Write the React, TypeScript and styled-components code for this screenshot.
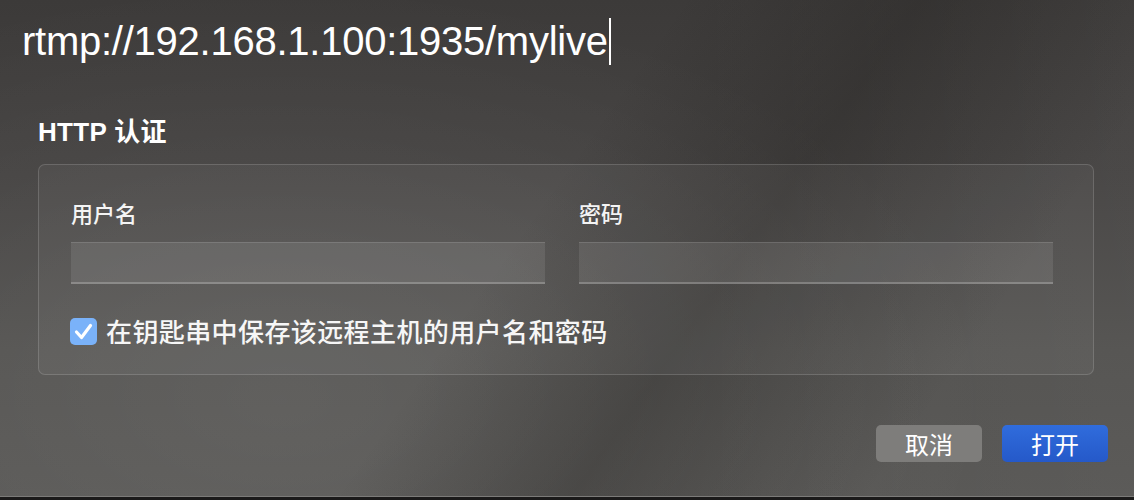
import React from "react";
import styled, { createGlobalStyle } from "styled-components";

const Global = createGlobalStyle`
  html, body { margin: 0; padding: 0; background: #3d3b3a; }
  * { box-sizing: border-box; }
`;

const Window = styled.div`
  position: relative;
  width: 1134px;
  height: 500px;
  overflow: hidden;
  display: flex;
  flex-direction: column;
  font-family: "Liberation Sans", "Noto Sans CJK SC", sans-serif;
  color: #fff;
  background:
    linear-gradient(125deg, rgba(0,0,0,0) 46%, rgba(28,26,24,0.30) 62%, rgba(0,0,0,0) 82%),
    radial-gradient(ellipse 720px 420px at 280px 400px, rgba(255,255,255,0.08), rgba(255,255,255,0) 100%),
    linear-gradient(90deg, rgba(0,0,0,0) 60%, rgba(255,255,255,0.03) 100%),
    linear-gradient(180deg, #3c3a39 0%, #454342 35%, #52514f 70%, #575654 100%);
`;

const UrlRow = styled.div`
  padding: 18px 22px 0;
  height: 106px;
  display: flex;
  align-items: flex-start;
`;

const UrlText = styled.span`
  font-family: "Liberation Sans", Arial, sans-serif;
  font-size: 40px;
  line-height: 47px;
  letter-spacing: -0.25px;
  color: #ffffff;
  border-right: 2px solid #ffffff;
  padding-right: 1px;
`;

const Section = styled.div`
  padding: 0 40px 0 38px;
  display: flex;
  flex-direction: column;
`;

const Title = styled.div`
  font-family: "Liberation Sans", "Noto Sans CJK SC", sans-serif;
  font-weight: 700;
  font-size: 26px;
  line-height: 32px;
  height: 58px;
  padding-top: 10px;
  letter-spacing: 0.3px;
`;

const GroupBox = styled.div`
  border: 1px solid rgba(255,255,255,0.15);
  border-radius: 7px;
  background: rgba(255,255,255,0.045);
  padding: 35px 40px 29px 32px;
  display: flex;
  flex-direction: column;
  gap: 33px;
`;

const Fields = styled.div`
  display: flex;
  gap: 34px;
`;

const Field = styled.div`
  width: 474px;
  display: flex;
  flex-direction: column;
  gap: 18px;
`;

const Label = styled.div`
  font-family: "Noto Sans CJK SC", sans-serif;
  font-weight: 500;
  font-size: 22px;
  line-height: 24px;
  color: #f4f4f4;
`;

const Input = styled.div`
  height: 42px;
  background: rgba(255,255,255,0.09);
  border-top: 1px solid rgba(255,255,255,0.12);
  border-bottom: 2px solid rgba(255,255,255,0.22);
`;

const CheckRow = styled.label`
  display: flex;
  align-items: center;
  gap: 9px;
  height: 28px;
`;

const Box = styled.span`
  width: 27px;
  height: 27px;
  margin-left: -1px;
  border-radius: 5px;
  background: #7ab2f9;
  display: flex;
  align-items: center;
  justify-content: center;
`;

const CheckText = styled.span`
  font-family: "Noto Sans CJK SC", sans-serif;
  font-weight: 500;
  font-size: 26px;
  line-height: 28px;
  color: #f6f6f6;
  letter-spacing: 0.4px;
`;

const Footer = styled.div`
  display: flex;
  justify-content: flex-end;
  gap: 20px;
  padding: 50px 26px 0 0;
`;

const Button = styled.button<{ $primary?: boolean }>`
  width: 106px;
  height: 37px;
  border: none;
  border-radius: 5px;
  font-family: "Noto Sans CJK SC", sans-serif;
  font-weight: 400;
  font-size: 24px;
  line-height: 37px;
  padding: 0;
  color: #fff;
  background: ${(p) =>
    p.$primary ? "linear-gradient(180deg, #306cdc 0%, #2559c9 100%)" : "#7e7d7b"};
`;

const BottomEdge = styled.div`
  position: absolute;
  left: 0;
  right: 0;
  bottom: 0;
  height: 4px;
  border-top: 1px solid #7c7b79;
  background: #1b1a1a;
`;

export default function App() {
  return (
    <>
      <Global />
      <Window>
        <UrlRow>
          <UrlText>rtmp://192.168.1.100:1935/mylive</UrlText>
        </UrlRow>
        <Section>
          <Title>HTTP 认证</Title>
          <GroupBox>
            <Fields>
              <Field>
                <Label>用户名</Label>
                <Input />
              </Field>
              <Field>
                <Label>密码</Label>
                <Input />
              </Field>
            </Fields>
            <CheckRow>
              <Box>
                <svg width="27" height="27" viewBox="0 0 27 27">
                  <path d="M6.5 14 L11.5 19.5 L20.5 7.5" fill="none" stroke="#fff" strokeWidth="3.2" strokeLinecap="round" strokeLinejoin="round" />
                </svg>
              </Box>
              <CheckText>在钥匙串中保存该远程主机的用户名和密码</CheckText>
            </CheckRow>
          </GroupBox>
        </Section>
        <Footer>
          <Button>取消</Button>
          <Button $primary>打开</Button>
        </Footer>
        <BottomEdge />
      </Window>
    </>
  );
}
